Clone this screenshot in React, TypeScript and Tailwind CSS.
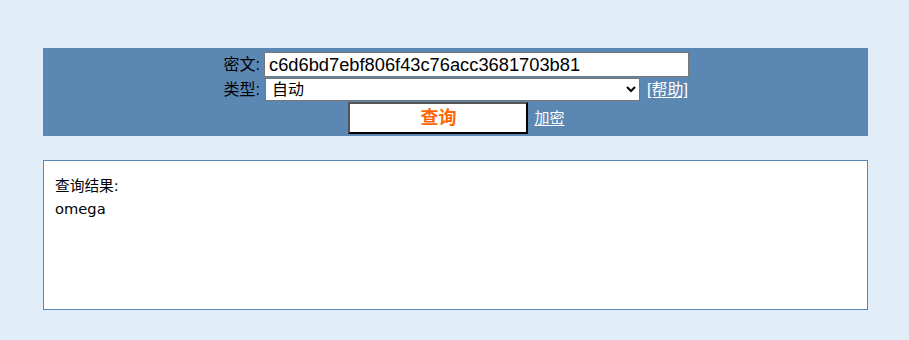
export default function App() {
  return (
    <div
      className="min-h-[340px] bg-[#e1eef8] pt-[48px] pb-[30px]"
      style={{ fontFamily: '"Liberation Sans", "Noto Sans CJK SC", sans-serif' }}
    >
      <div className="ml-[43px] w-[825px] bg-[#5b88b3] pt-[4px] pb-[2px]">
        <div className="flex flex-col items-center">
          <div className="flex flex-col">
            <div className="flex h-[25px] items-center">
              <span className="w-[42px] pr-[4px] text-right text-[16px] leading-none text-black">密文:</span>
              <input
                className="h-[25px] w-[425px] border border-[#767676] bg-white px-[4px] text-[18.3px] text-black outline-none"
                defaultValue="c6d6bd7ebf806f43c76acc3681703b81"
              />
            </div>
            <div className="mt-[1px] flex items-center">
              <span className="w-[42px] pr-[4px] text-right text-[16px] leading-none text-black">类型:</span>
              <select className="ml-[1px] h-[23px] w-[375px] border border-[#767676] bg-white px-[2px] text-[16px] text-black">
                <option>自动</option>
              </select>
              <a href="#" className="ml-[7px] text-[16px] leading-none text-white underline underline-offset-2">
                [帮助]
              </a>
            </div>
          </div>
          <div className="mt-[1px] flex items-center pl-[2px]">
            <button
              type="button"
              className="h-[32px] w-[180px] border-2 border-t-[#555] border-l-[#555] border-b-black border-r-black bg-white text-[18px] font-bold text-[#ff6600]"
            >
              查询
            </button>
            <a href="#" className="ml-[6px] text-[15px] text-white underline underline-offset-2">
              加密
            </a>
          </div>
        </div>
      </div>
      <div
        className="ml-[43px] mt-[24px] h-[150px] w-[825px] border border-[#5b88b3] bg-white px-[11px] pt-[13px] text-[14.7px] leading-[23px] text-black"
        style={{ fontFamily: '"DejaVu Sans", "Noto Sans CJK SC", sans-serif' }}
      >
        <div>查询结果:</div>
        <div>omega</div>
      </div>
    </div>
  );
}
